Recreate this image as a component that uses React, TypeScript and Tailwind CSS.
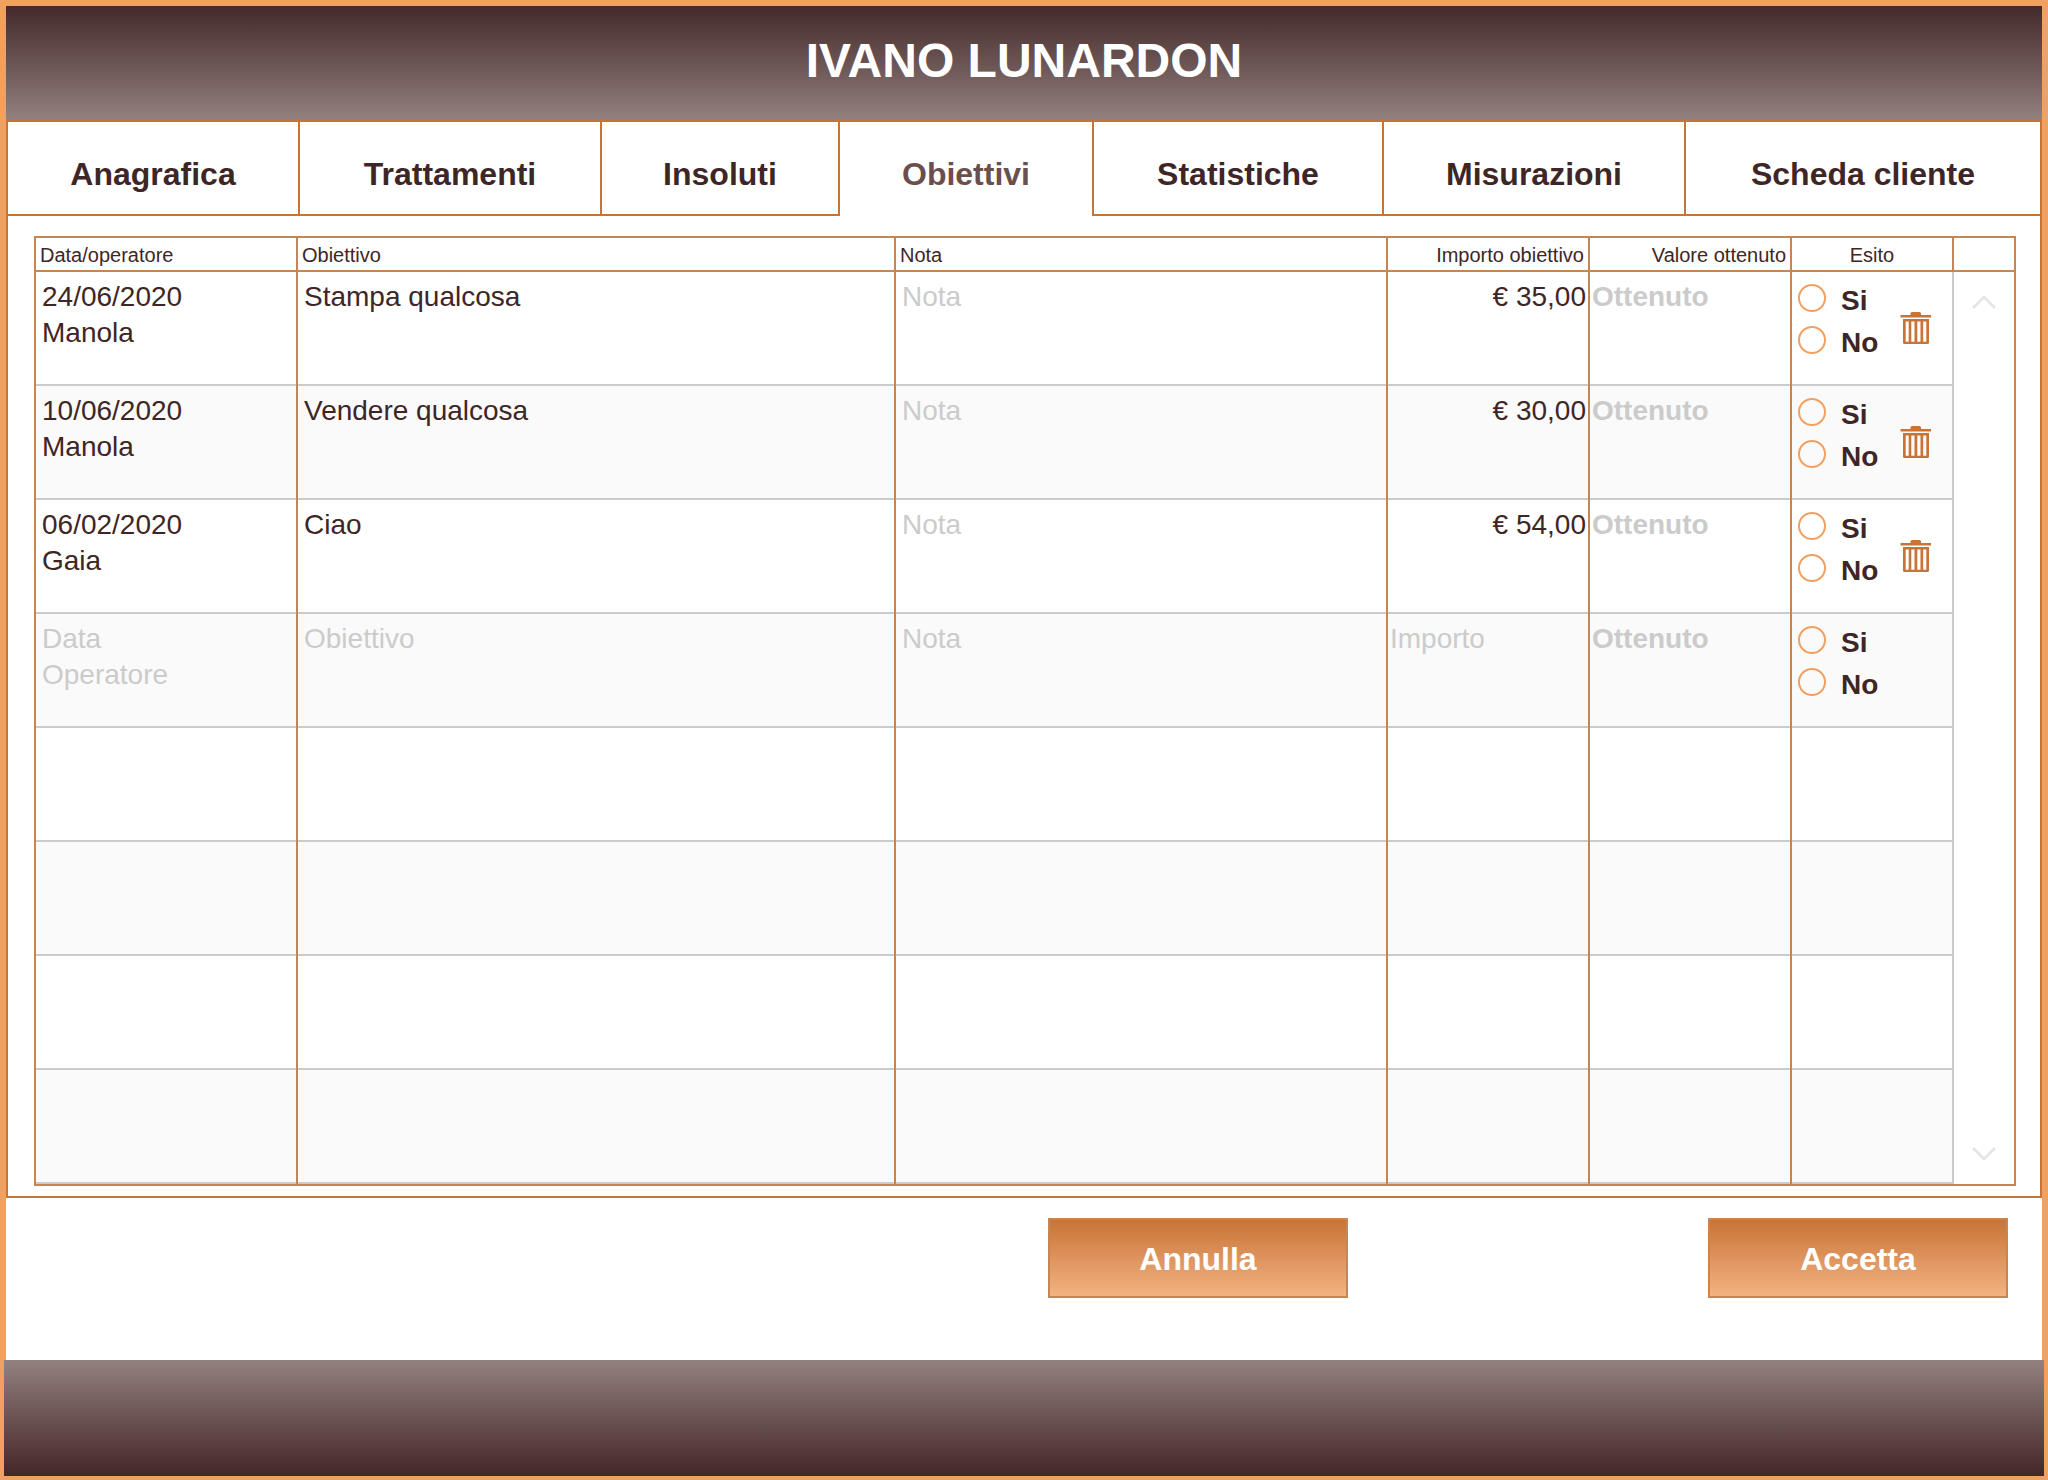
import { useState } from "react";
import clsx from "clsx";

const tabs = [
  "Anagrafica",
  "Trattamenti",
  "Insoluti",
  "Obiettivi",
  "Statistiche",
  "Misurazioni",
  "Scheda cliente",
];

const goals = [
  { date: "24/06/2020", operator: "Manola", goal: "Stampa qualcosa", amount: "€ 35,00" },
  { date: "10/06/2020", operator: "Manola", goal: "Vendere qualcosa", amount: "€ 30,00" },
  { date: "06/02/2020", operator: "Gaia", goal: "Ciao", amount: "€ 54,00" },
];

// saved goals, one row for a new goal, then blank rows
const ROWS = 8;

const fieldClass =
  "block w-full resize-none overflow-hidden bg-transparent text-[28px] leading-9 outline-none placeholder:text-[#cbcbcb]";
// the row line is an inset shadow so that the column lines run through unbroken
const cellClass = "h-[114px] border-r-2 border-[#c98551] pt-[7px] align-top shadow-[inset_0_-2px_0_#cbcbcb]";
const headClass = "h-[34px] border-r-2 border-b-2 border-[#c98551] px-1 pt-0.5 leading-[30px] font-normal";

function TrashIcon() {
  return (
    <svg viewBox="0 0 32 32" className="size-8" fill="#c87437" aria-hidden="true">
      <path d="M10.500 1.500Q10.500 0 12 0H19.500Q21 0 21 1.500V3H31V5.500H.5V3H10.500Z" />
      <path
        fillRule="evenodd"
        d="M3 7H29V30.500Q29 32 27.500 32H4.500Q3 32 3 30.500ZM5.700 9.500V29.700H8.700V9.500ZM11.300 9.500V29.700H14.500V9.500ZM17.300 9.500V29.700H20.500V9.500ZM23.200 9.500V29.700H26.300V9.500Z"
      />
    </svg>
  );
}

function Outcome({ row }: { row: number }) {
  return (
    <div>
      {["Si", "No"].map((option) => (
        <label key={option} className="flex h-[42px] items-center gap-[15px]">
          <input
            type="radio"
            name={`esito-${row}`}
            value={option}
            className="size-7 appearance-none rounded-full border-2 border-[#f0a061] checked:bg-[#f0a061]"
          />
          <span className="pt-1.5 text-[28px] leading-9 font-bold">{option}</span>
        </label>
      ))}
    </div>
  );
}

function GoalRow({ row }: { row: number }) {
  const goal = goals[row];
  const editable = row <= goals.length;

  return (
    <tr className="even:bg-[#fafafa]">
      <td className={clsx(cellClass, "px-1.5")}>
        {editable && (
          <>
            <input aria-label="Data" placeholder="Data" defaultValue={goal?.date} className={fieldClass} />
            <input
              aria-label="Operatore"
              placeholder="Operatore"
              defaultValue={goal?.operator}
              className={fieldClass}
            />
          </>
        )}
      </td>
      <td className={clsx(cellClass, "px-1.5")}>
        {editable && (
          <textarea
            aria-label="Obiettivo"
            placeholder="Obiettivo"
            rows={2}
            defaultValue={goal?.goal}
            className={fieldClass}
          />
        )}
      </td>
      <td className={clsx(cellClass, "px-1.5")}>
        {editable && <textarea aria-label="Nota" placeholder="Nota" rows={2} className={fieldClass} />}
      </td>
      <td className={clsx(cellClass, "px-0.5")}>
        {editable && (
          <input
            aria-label="Importo"
            placeholder="Importo"
            defaultValue={goal?.amount}
            className={clsx(fieldClass, goal && "text-right")}
          />
        )}
      </td>
      <td className={clsx(cellClass, "px-0.5")}>
        {editable && (
          <input aria-label="Ottenuto" placeholder="Ottenuto" className={clsx(fieldClass, "font-bold")} />
        )}
      </td>
      <td className="border-r-2 border-b-2 border-[#cbcbcb] pt-[5px] pl-1.5 align-top">
        {editable && (
          <div className="flex items-start justify-between pr-5">
            <Outcome row={row} />
            {goal && (
              <button type="button" aria-label="Elimina obiettivo" className="mt-[35px]">
                <TrashIcon />
              </button>
            )}
          </div>
        )}
      </td>
      {row === 0 && (
        <td rowSpan={ROWS} className="h-px bg-white p-0">
          <div className="flex h-full flex-col items-center justify-between py-[23px]">
            <button type="button" aria-label="Scorri su">
              <Chevron d="M1 13 12 2 23 13" />
            </button>
            <button type="button" aria-label="Scorri giù">
              <Chevron d="M1 1 12 12 23 1" />
            </button>
          </div>
        </td>
      )}
    </tr>
  );
}

function Chevron({ d }: { d: string }) {
  return (
    <svg viewBox="0 0 24 14" className="block h-3.5 w-6" fill="none" stroke="#e4e4e4" strokeWidth="2.5">
      <path d={d} />
    </svg>
  );
}

export default function App() {
  const [active, setActive] = useState("Obiettivi");

  return (
    <div className="flex min-h-screen flex-col border-4 border-[#f0a061] bg-[#f0a061] font-['Liberation_Sans',Arial,sans-serif] text-[#3f2626]">
      <div className="mx-0.5 mt-0.5 flex flex-1 flex-col bg-white">
        <header className="flex h-[114px] items-center justify-center bg-linear-to-b from-[#442b2a] to-[#938180] pb-1">
          <h1 className="text-5xl font-bold text-white">IVANO LUNARDON</h1>
        </header>

        <main className="border-2 border-[#c87437]">
          <nav
            role="tablist"
            className="grid grid-cols-[292fr_302fr_238fr_254fr_290fr_302fr_354fr]"
          >
            {tabs.map((tab) => (
              <button
                key={tab}
                type="button"
                role="tab"
                aria-selected={tab === active}
                onClick={() => setActive(tab)}
                className={clsx(
                  "h-[94px] border-r-2 border-[#c87437] pt-3 text-[32px] leading-10 font-bold last:border-r-0",
                  tab === active ? "pb-0.5 text-[#6b4f4d]" : "border-b-2"
                )}
              >
                {tab}
              </button>
            ))}
          </nav>

          <div className="mt-5 mr-6 mb-2.5 ml-[26px] border-2 border-[#c98551]">
            <table className="w-full table-fixed border-separate border-spacing-0">
              <colgroup>
                <col className="w-[262px]" />
                <col />
                <col className="w-[492px]" />
                <col className="w-[202px]" />
                <col className="w-[202px]" />
                <col className="w-[162px]" />
                <col className="w-[60px]" />
              </colgroup>
              <thead className="text-xl">
                <tr>
                  <th className={clsx(headClass, "text-left")}>Data/operatore</th>
                  <th className={clsx(headClass, "text-left")}>Obiettivo</th>
                  <th className={clsx(headClass, "text-left")}>Nota</th>
                  <th className={clsx(headClass, "text-right")}>Importo obiettivo</th>
                  <th className={clsx(headClass, "text-right")}>Valore ottenuto</th>
                  <th className={clsx(headClass, "text-center")}>Esito</th>
                  <td className="border-b-2 border-[#c98551]" />
                </tr>
              </thead>
              <tbody>
                {Array.from({ length: ROWS }, (_, row) => (
                  <GoalRow key={row} row={row} />
                ))}
              </tbody>
            </table>
          </div>
        </main>

        <div className="flex flex-1 items-start justify-end gap-[360px] px-[34px] pt-5">
          {["Annulla", "Accetta"].map((action) => (
            <button
              key={action}
              type="button"
              className="h-20 w-[300px] border-2 border-[#c98551] bg-linear-to-b from-[#c87435] to-[#f3b381] pt-0.5 text-[32px] font-bold text-white"
            >
              {action}
            </button>
          ))}
        </div>
      </div>
      <footer className="h-[116px] bg-linear-to-b from-[#938180] to-[#442828]" />
    </div>
  );
}
